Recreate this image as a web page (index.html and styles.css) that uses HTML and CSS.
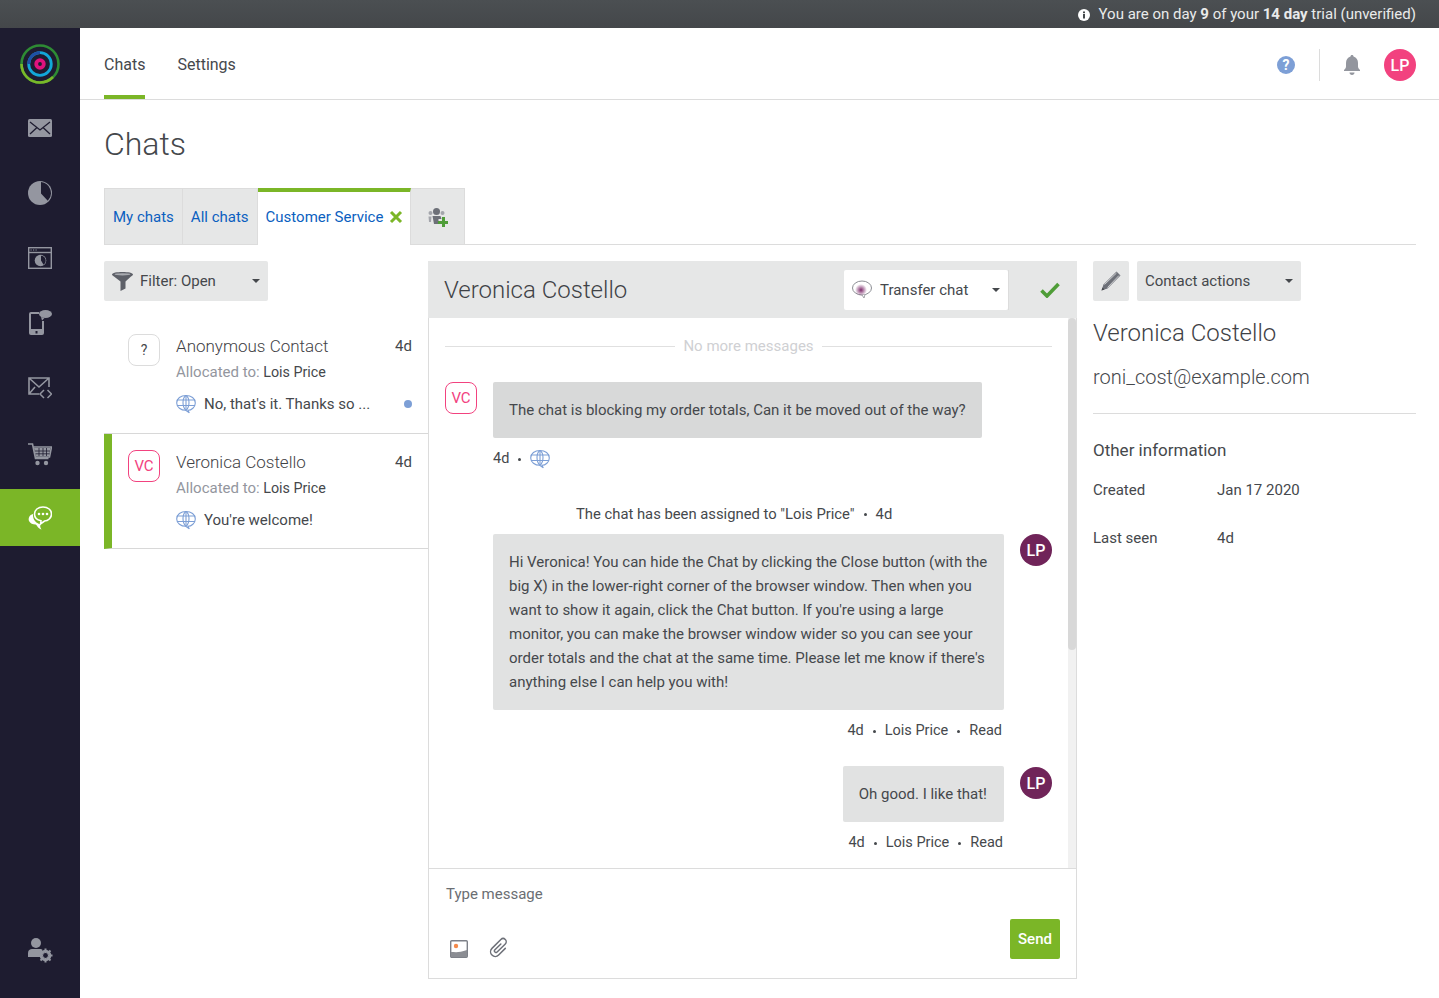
FILE: index.html
```html
<!DOCTYPE html>
<html lang="en">
<head>
<meta charset="utf-8">
<title>Chats</title>
<link rel="stylesheet" href="styles.css">
</head>
<body>
<svg class="defs" width="0" height="0" aria-hidden="true">
  <symbol id="globe" viewBox="0 0 20 20">
    <g fill="none" stroke="#7d9fd6" stroke-width="1.1">
      <path d="M10 1.500c5.200 0 9.300 3 9.300 7.400s-4 7.400-7.300 7.400l1.300 2.600-3.600-2.600C5 16.300.7 13.300.7 8.900S4.800 1.500 10 1.500z"/>
      <path d="M1 6h18M1 11.500h18M10 1.500v14.800"/>
      <path d="M10 1.500C6 4 6 13 10 16.300M10 1.500c4 2.500 4 11.500 0 14.800"/>
    </g>
  </symbol>
</svg>
<div class="trial">
  <svg class="trial-icon" viewBox="0 0 12 12"><circle cx="6" cy="6" r="6" fill="#fff"/><rect x="5" y="5" width="2" height="4.500" fill="#45494c"/><rect x="5" y="2.500" width="2" height="1.700" fill="#45494c"/></svg>
  <span>You are on day <b>9</b> of your <b>14 day</b> trial (unverified)</span>
</div>
<div class="app">
  <nav class="rail">
    <div class="rail-logo">
      <svg viewBox="0 0 40 40" width="40" height="40">
        <circle cx="20" cy="20" r="18.500" fill="none" stroke="#2e8b34" stroke-width="2.600"/>
        <path d="M1.500 20A18.500 18.500 0 0 0 20 38.500 18.500 18.500 0 0 0 33 33" fill="none" stroke="#7ab829" stroke-width="2.600"/>
        <circle cx="20" cy="20" r="11.300" fill="none" stroke="#12a7d8" stroke-width="2.800"/>
        <path d="M8.700 20A11.300 11.300 0 0 1 20 8.700" fill="none" stroke="#1f4fa5" stroke-width="2.800"/>
        <circle cx="20" cy="20" r="3.800" fill="none" stroke="#e0127d" stroke-width="3.800"/>
      </svg>
    </div>
    <a class="rail-item"><svg viewBox="0 0 24 18" width="24" height="18"><rect width="24" height="18" rx="1.500" fill="#9496a0"/><path d="M2 3l10 8 10-8M2 15l7-6.500M22 15l-7-6.500" fill="none" stroke="#1e1c30" stroke-width="1.300"/></svg></a>
    <a class="rail-item"><svg viewBox="0 0 24 24" width="24" height="24"><circle cx="12" cy="12" r="12" fill="#9496a0"/><path d="M13 1.100a11 11 0 0 1 6.800 18.600L13 12.500z" fill="#1e1c30"/></svg></a>
    <a class="rail-item"><svg viewBox="0 0 24 22" width="24" height="22"><rect x=".7" y=".7" width="22.600" height="20.600" fill="none" stroke="#9496a0" stroke-width="1.400"/><path d="M1 5.500h22" stroke="#9496a0" stroke-width="1.400"/><path d="M2.500 3h1.200M5 3h1.200M7.500 3h1.200" stroke="#9496a0" stroke-width="1.200"/><circle cx="12.500" cy="13.500" r="5.800" fill="#9496a0"/><path d="M13 8.700a5 5 0 0 1 2.600 9L13 13.500z" fill="#1e1c30"/></svg></a>
    <a class="rail-item"><svg viewBox="0 0 24 25" width="24" height="25"><rect x="1" y="2" width="15" height="23" rx="2" fill="#9496a0"/><rect x="3" y="4" width="11" height="15" fill="#1e1c30"/><rect x="7.500" y="21" width="2" height="2.500" fill="#1e1c30"/><rect x="11" y="0" width="13" height="11" fill="#1e1c30"/><ellipse cx="17.500" cy="4" rx="6.500" ry="4" fill="#9496a0"/><path d="M13 7l1 3.500 2.500-2.500z" fill="#9496a0"/></svg></a>
    <a class="rail-item"><svg viewBox="0 0 24 22" width="24" height="22"><path d="M21 10V1H1v16h10M1 1l10 9 10-9M1 17l6-7" fill="none" stroke="#9496a0" stroke-width="1.600"/><path d="M16 13l-4 4 4 4M19.500 13l4 4-4 4" fill="none" stroke="#9496a0" stroke-width="1.500"/></svg></a>
    <a class="rail-item"><svg class="cart-icon" viewBox="0 0 24 23" width="24" height="23"><path d="M0 1h4.500l3 14.500h13M5 4h18.500l-2 10H7.500" fill="none" stroke="#9496a0" stroke-width="1.600"/><path d="M6 5h16.500l-1.500 8H7.500z" fill="#9496a0"/><path d="M11 5v8M15 5v8M18.500 5v8M7 8h15M7.500 10.800h14" stroke="#1e1c30" stroke-width=".8"/><circle cx="9.500" cy="20" r="2.200" fill="#9496a0"/><circle cx="18" cy="20" r="2.200" fill="#9496a0"/></svg></a>
    <a class="rail-item is-active"><svg viewBox="0 0 24 24" width="24" height="24"><path d="M5 8C1.500 9 0 12 1 15c1 2.500 4 3.500 6.500 3.500 1.500 0 2 4 6 5-1.500-2-1.500-3.500-1-5-3.500-1-8-4-7.500-10.500z" fill="#fff"/><path d="M15 1c5 0 8.500 3 8.500 7s-3.500 7-7 7l-4 3 .5-3.200C9 14 6.500 11.500 6.500 8 6.500 4 10 1 15 1z" fill="#7bb627" stroke="#fff" stroke-width="1.600"/><circle cx="11" cy="8" r="1.300" fill="#fff"/><circle cx="15" cy="8" r="1.300" fill="#fff"/><circle cx="19" cy="8" r="1.300" fill="#fff"/></svg></a>
    <a class="rail-item rail-bottom"><svg viewBox="0 0 25 25" width="25" height="25"><circle cx="8" cy="5" r="5" fill="#9496a0"/><path d="M0 19v-4c0-3 2-4 4-4h8c1 0 2 .3 2.500 1L12 19z" fill="#9496a0"/><circle cx="17.500" cy="17.500" r="4.400" fill="none" stroke="#9496a0" stroke-width="2.800"/><path d="M17.500 10.500v14M10.500 17.500h14M12.500 12.500l10 10M22.500 12.500l-10 10" stroke="#9496a0" stroke-width="2"/><circle cx="17.500" cy="17.500" r="2.400" fill="#1e1c30"/></svg></a>
  </nav>
  <main class="main">
    <header class="topnav">
      <a class="topnav-link is-current">Chats</a>
      <a class="topnav-link">Settings</a>
      <div class="topnav-tools">
        <svg class="help" viewBox="0 0 18 18" width="18" height="18"><circle cx="9" cy="9" r="9" fill="#7d9fd6"/><text x="9" y="14" text-anchor="middle" class="help-mark">?</text></svg>
        <span class="tool-sep"></span>
        <svg class="bell" viewBox="0 0 16 20" width="16" height="20"><path d="M8 0c1 0 1.500.7 1.500 1.500C12.500 2.300 14 5 14 8v3.500c0 1.500 1 2.500 2 3.500v1H0v-1c1-1 2-2 2-3.500V8c0-3 1.500-5.700 4.500-6.500C6.500.7 7 0 8 0z" fill="#93969e"/><path d="M5.500 17.500h5C10.500 19 9.500 20 8 20s-2.500-1-2.500-2.500z" fill="#93969e"/></svg>
        <span class="avatar avatar-pink">LP</span>
      </div>
    </header>
    <div class="content">
      <h1 class="page-title">Chats</h1>
      <div class="tabs">
        <a class="tab">My chats</a>
        <a class="tab">All chats</a>
        <a class="tab tab-active">Customer Service
          <svg class="tab-x" viewBox="0 0 14 14" width="14" height="14"><path d="M2 2l10 10M12 2L2 12" stroke="#7bb627" stroke-width="3" fill="none"/></svg>
        </a>
        <a class="tab tab-add">
          <svg viewBox="0 0 21 20" width="21" height="20"><circle cx="9.500" cy="4.500" r="3.500" fill="#6d7078"/><circle cx="3.500" cy="6" r="2" fill="#a3a5ab"/><circle cx="15.500" cy="6" r="2" fill="#a3a5ab"/><path d="M5.500 9h8l1 3h-3v5H7z" fill="#6d7078"/><path d="M1.500 9.500h3L4 15H2z" fill="#a3a5ab"/><path d="M11 14h4v-4h3v4h3v3h-3v3h-3v-3h-4z" fill="#4f9d38"/></svg>
        </a>
      </div>
      <div class="columns">
        <section class="list">
          <button class="dropdown filter">
            <svg viewBox="0 0 21 19" width="21" height="19"><path d="M0 2.500C0 .8 5 0 10.500 0S21 .8 21 2.500c0 .7-1 1.500-2 2l-5.500 5v7L8.500 19V9.500L2 4.500c-1-.5-2-1.300-2-2z" fill="#5d6068"/><ellipse cx="10.500" cy="2.300" rx="8" ry="1.100" fill="#a9abb0"/></svg>
            <span>Filter: Open</span><i class="caret"></i>
          </button>
          <article class="conv">
            <span class="badge badge-grey">?</span>
            <div class="conv-body">
              <div class="conv-top"><span class="conv-name">Anonymous Contact</span><span class="conv-time">4d</span></div>
              <div class="conv-alloc"><span>Allocated to:</span> Lois Price</div>
              <div class="conv-last"><svg class="globe"><use href="#globe"/></svg><span>No, that's it. Thanks so ...</span><i class="unread"></i></div>
            </div>
          </article>
          <article class="conv is-open">
            <span class="badge">VC</span>
            <div class="conv-body">
              <div class="conv-top"><span class="conv-name">Veronica Costello</span><span class="conv-time">4d</span></div>
              <div class="conv-alloc"><span>Allocated to:</span> Lois Price</div>
              <div class="conv-last"><svg class="globe"><use href="#globe"/></svg><span>You're welcome!</span></div>
            </div>
          </article>
        </section>
        <section class="chat">
          <div class="chat-head">
            <h2 class="chat-name">Veronica Costello</h2>
            <button class="dropdown transfer">
              <svg viewBox="0 0 21 20" width="21" height="20"><defs><radialGradient id="tg"><stop offset="0" stop-color="#7d2a6b"/><stop offset="1" stop-color="#7d2a6b" stop-opacity="0"/></radialGradient></defs><ellipse cx="10" cy="8" rx="9.500" ry="7" fill="#fff" stroke="#8b8d93"/><circle cx="9" cy="10" r="6" fill="url(#tg)"/><path d="M10 15l2 3 1-3.500" fill="#fff" stroke="#8b8d93" stroke-width=".8"/></svg>
              <span>Transfer chat</span><i class="caret"></i>
            </button>
            <span class="head-sep"></span>
            <svg class="resolve" viewBox="0 0 20 16" width="20" height="16"><path d="M1.500 8.500l5.500 5.500L18.500 2" fill="none" stroke="#4f9d38" stroke-width="3.600"/></svg>
          </div>
          <div class="chat-scroll">
            <div class="messages">
              <div class="no-more"><span>No more messages</span></div>
              <div class="msg msg-in">
                <span class="badge">VC</span>
                <div class="msg-col">
                  <p class="bubble bubble-dark">The chat is blocking my order totals, Can it be moved out of the way?</p>
                  <div class="meta"><span>4d</span><i class="dot"></i><svg class="globe"><use href="#globe"/></svg></div>
                </div>
              </div>
              <div class="event">The chat has been assigned to "Lois Price"<i class="dot"></i>4d</div>
              <div class="msg msg-out">
                <div class="msg-col out-col">
                  <p class="bubble bubble-long">Hi Veronica! You can hide the Chat by clicking the Close button (with the big X) in the lower-right corner of the browser window. Then when you want to show it again, click the Chat button. If you're using a large monitor, you can make the browser window wider so you can see your order totals and the chat at the same time. Please let me know if there's anything else I can help you with!</p>
                  <div class="meta meta-out"><span>4d</span><i class="dot"></i><span>Lois Price</span><i class="dot"></i><span>Read</span></div>
                </div>
                <span class="avatar avatar-plum">LP</span>
              </div>
              <div class="msg msg-out msg-last">
                <div class="msg-col out-col">
                  <p class="bubble">Oh good. I like that!</p>
                  <div class="meta meta-out meta-tail"><span>4d</span><i class="dot"></i><span>Lois Price</span><i class="dot"></i><span>Read</span></div>
                </div>
                <span class="avatar avatar-plum">LP</span>
              </div>
            </div>
            <div class="scrollbar"><div class="scroll-thumb"></div></div>
          </div>
          <div class="composer">
            <div class="placeholder">Type message</div>
            <div class="composer-row">
              <svg viewBox="0 0 18 18" width="18" height="18"><rect x=".7" y=".7" width="16.600" height="16.600" rx="1" fill="#fff" stroke="#7d8088" stroke-width="1.400"/><path d="M1 17v-5c4 0 8 1 16-2v7z" fill="#8b8d93"/><circle cx="6" cy="6" r="2.200" fill="#f58a4b"/></svg>
              <svg class="clip" viewBox="0 0 21 21" width="22" height="22"><path transform="rotate(45 10.500 10.500)" d="M9 6.500v8a1.500 1.500 0 0 0 3 0V3.500a3 3 0 0 0-6 0v12a4.500 4.500 0 0 0 9 0v-9" fill="none" stroke="#6d7078" stroke-width="1.400" stroke-linecap="round"/></svg>
              <button class="send">Send</button>
            </div>
          </div>
        </section>
        <aside class="contact">
          <div class="contact-actions">
            <button class="edit-btn"><svg viewBox="0 0 20 20" width="20" height="20"><path d="M15.500 .5l4 4L6.500 17.500 .5 19.500l2-6z" fill="#6d7078"/><path d="M3.500 13.500l12-11.500M6.500 16.500l11.500-12" stroke="#e6e7e7" stroke-width=".8"/><path d="M.5 19.500l1-3 2 2z" fill="#45484c"/></svg></button>
            <button class="dropdown actions"><span>Contact actions</span><i class="caret"></i></button>
          </div>
          <h2 class="contact-name">Veronica Costello</h2>
          <div class="contact-email">roni_cost@example.com</div>
          <h3 class="info-title">Other information</h3>
          <dl class="info">
            <dt>Created</dt><dd>Jan 17 2020</dd>
            <dt>Last seen</dt><dd>4d</dd>
          </dl>
        </aside>
      </div>
    </div>
  </main>
</div>
</body>
</html>
```
FILE: styles.css
```css
* { box-sizing: border-box; }
html, body { margin: 0; height: 100%; }
body { width: 1439px; height: 998px; overflow: hidden; font-family: Roboto, "Liberation Sans", sans-serif; font-size: 15px; color: #45484c; background: #fff; display: flex; flex-direction: column; }
.defs { position: absolute; }
.trial { height: 28px; flex: none; background: linear-gradient(#4b4f52, #44474a); color: #e9eaea; display: flex; align-items: center; justify-content: flex-end; gap: 9px; padding-right: 23px; }
.trial-icon { width: 12px; height: 12px; margin-top: 2px; }
.trial b { font-weight: 700; }
.app { flex: 1; display: flex; min-height: 0; }
.rail { width: 80px; flex: none; background: #1e1c30; display: flex; flex-direction: column; align-items: stretch; }
.rail-logo { height: 65px; padding-top: 16px; display: flex; justify-content: center; flex: none; margin-bottom: 2px; }
.rail-item { height: 65px; flex: none; display: flex; align-items: center; justify-content: center; }
.cart-icon { margin-top: 4px; }
.rail-item.is-active { height: 57px; background: #7bb627; margin-top: 4px; }
.rail-bottom { margin-top: auto; margin-bottom: 15px; height: 65px; }
.main { flex: 1; min-width: 0; display: flex; flex-direction: column; }
.topnav { height: 72px; flex: none; border-bottom: 1px solid #dcdcdc; display: flex; padding: 0 23px 0 24px; gap: 32px; }
.topnav-link { height: 71px; line-height: 73px; font-size: 16px; color: #45484c; }
.topnav-link.is-current { border-bottom: 4px solid #7bb627; }
.topnav-tools { margin-left: auto; display: flex; align-items: center; height: 74px; }
.help-mark { font: 700 14px Roboto, sans-serif; fill: #fff; }
.tool-sep { width: 1px; height: 32px; background: #dcdcdc; margin: 0 24px 0 24px; }
.avatar { width: 32px; height: 32px; border-radius: 50%; color: #fff; font-size: 16px; font-weight: 500; display: flex; align-items: center; justify-content: center; flex: none; }
.avatar-pink { background: #f2427f; margin-left: 24px; }
.avatar-plum { background: #702459; }
.content { flex: 1; min-height: 0; padding: 0 23px 20px 24px; display: flex; flex-direction: column; }
.page-title { margin: 24px 0 24px; font-size: 32px; font-weight: 300; line-height: 40px; color: #45484c; }
.tabs { display: flex; height: 57px; flex: none; border-bottom: 1px solid #dcdcdc; }
.tab { height: 57px; background: #e6e7e7; border: 1px solid #dcdcdc; border-left-width: 0; display: flex; align-items: center; padding: 1px 8px 0; color: #0b5fc0; }
.tab:first-child { border-left-width: 1px; }
.tab-active { background: #fff; border-top: 4px solid #7bb627; border-bottom: 0; padding: 0 7px 3px 8px; gap: 6px; }
.tab-add { width: 54px; justify-content: center; padding: 0; }
.columns { flex: 1; min-height: 0; display: flex; margin-top: 16px; }
.list { width: 324px; flex: none; display: flex; flex-direction: column; align-items: flex-start; }
.dropdown { border: 0; background: #e6e7e7; border-radius: 2px; height: 40px; display: flex; align-items: center; font: inherit; color: #45484c; padding: 0 8px; }
.caret { width: 0; height: 0; border: 4px solid transparent; border-top-color: #45484c; border-bottom-width: 0; margin-left: auto; }
.filter { width: 164px; margin-bottom: 18px; gap: 7px; }
.conv { width: 100%; display: flex; gap: 16px; padding: 15px 16px 16px 24px; border-bottom: 1px solid #d8d8d8; height: 115px; }
.conv.is-open { border-left: 8px solid #7bb627; padding-left: 16px; padding-top: 16px; }
.badge { width: 32px; height: 32px; border-radius: 8px; border: 1px solid #f2427f; color: #f2427f; background: #fff; display: flex; align-items: center; justify-content: center; font-size: 15px; flex: none; }
.badge-grey { border-color: #dcdcdc; color: #45484c; font-size: 14px; }
.conv-body { flex: 1; min-width: 0; }
.conv-top { display: flex; justify-content: space-between; font-size: 17px; font-weight: 300; line-height: 24px; }
.conv-name { color: #3f4246; }
.conv-time { font-size: 15px; font-weight: 400; }
.conv-alloc { font-size: 14.300px; line-height: 20px; margin-top: 4px; }
.conv-alloc span { color: #93969e; font-size: 15px; }
.conv-last { display: flex; align-items: center; gap: 8px; margin-top: 12px; line-height: 20px; }
.globe { width: 20px; height: 20px; flex: none; }
.unread { width: 8px; height: 8px; border-radius: 50%; background: #7d9fd6; margin-left: auto; }
.chat { width: 649px; flex: none; display: flex; flex-direction: column; border: 1px solid #dcdcdc; border-top: 0; height: 718px; }
.chat-head { height: 57px; flex: none; margin: 0 -1px; background: #e6e7e7; display: flex; align-items: center; padding: 0 16px; }
.chat-name { margin: 0; font-size: 24px; font-weight: 300; color: #3f4246; flex: 1; }
.transfer { background: #fff; width: 164px; gap: 7px; }
.transfer span { padding-top: 1px; }
.head-sep { width: 1px; height: 40px; background: #dcdcdc; }
.resolve { margin-left: 31px; margin-right: 1px; }
.chat-scroll { flex: 1; min-height: 0; display: flex; overflow: hidden; }
.messages { flex: 1; min-width: 0; padding: 0 16px; }
.no-more { display: flex; align-items: center; gap: 8px; color: #cfd0d3; height: 56px; }
.no-more::before, .no-more::after { content: ""; flex: 1; height: 1px; background: #e0e0e0; }
.msg { display: flex; gap: 16px; }
.msg-in { margin-top: 8px; }
.msg-out { margin-left: 48px; margin-top: 8px; }
.msg-last { margin-top: 23px; }
.msg-last .avatar { margin-top: 1px; }
.msg-last .bubble { padding-right: 17px; }
.msg-col { flex: 1; min-width: 0; }
.out-col { display: flex; flex-direction: column; align-items: flex-end; }
.bubble { margin: 0; background: #e1e2e2; border-radius: 2px; padding: 16px; line-height: 24px; }
.bubble-dark { background: #d8d9d9; display: inline-block; }
.bubble-long { width: 511px; }
.meta { display: flex; align-items: center; font-size: 14.500px; line-height: 24px; margin-top: 9px; height: 24px; }
.meta-out { padding-right: 2px; }
.meta-tail { padding-right: 1px; }
.dot { width: 3px; height: 3px; border-radius: 50%; background: #45484c; margin: 0 9px; flex: none; }
.event { font-size: 14.800px; margin: 31px 0 0 131px; line-height: 24px; height: 24px; display: flex; align-items: center; }
.scrollbar { width: 8px; flex: none; background: #f1f1f1; }
.scroll-thumb { height: 332px; background: #d8d8d8; border-radius: 4px; }
.composer { height: 110px; flex: none; border-top: 1px solid #dcdcdc; padding: 15px 16px 0 17px; }
.placeholder { line-height: 20px; color: #6b6e73; }
.composer-row { display: flex; align-items: flex-end; gap: 21px; height: 55px; padding-left: 4px; }
.composer-row svg { margin-bottom: 1px; }
.composer-row .clip { margin-bottom: 0; margin-left: -1px; }
.send { margin-left: auto; width: 50px; height: 40px; border: 0; border-radius: 2px; background: #7bb627; color: #fff; font: 500 15px Roboto, sans-serif; padding: 0; }
.contact { flex: 1; min-width: 0; margin-left: 16px; }
.contact-actions { display: flex; gap: 8px; }
.edit-btn { width: 36px; height: 40px; border: 0; border-radius: 2px; background: #e6e7e7; padding: 0; display: flex; align-items: center; justify-content: center; }
.actions { width: 164px; }
.contact-name { margin: 16px 0 0; font-size: 24px; font-weight: 300; line-height: 32px; color: #3f4246; }
.contact-email { font-size: 20px; font-weight: 300; line-height: 28px; margin-top: 14px; padding-bottom: 22px; border-bottom: 1px solid #dcdcdc; }
.info-title { margin: 25px 0 0; font-size: 17px; font-weight: 400; line-height: 22px; }
.info { margin: 19px 0 0; display: grid; grid-template-columns: 124px 1fr; row-gap: 28px; line-height: 20px; }
.info dd { margin: 0; }
```
